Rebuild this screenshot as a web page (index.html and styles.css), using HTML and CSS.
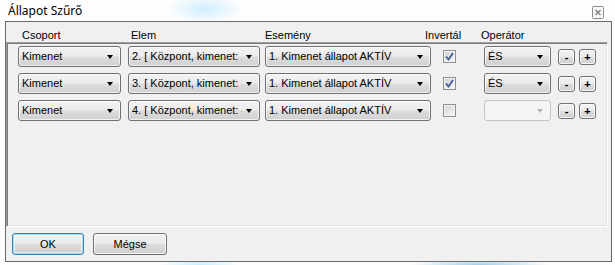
FILE: index.html
```html
<!DOCTYPE html>
<html lang="hu">
<head>
    <meta charset="UTF-8">
    <title>Állapot Szűrő</title>
    <link rel="stylesheet" href="styles.css">
</head>
<body>
    <div class="window">
        <div class="titlebar">
            <span class="title">Állapot Szűrő</span>
            <span class="close">
                <svg width="12" height="13" viewBox="0 0 12 13">
                    <rect x="0.5" y="0.5" width="11" height="12" rx="1" fill="#f7f7f7" stroke="#8c8c8c"/>
                    <path d="M3.5 4 L8.5 9 M8.5 4 L3.5 9" stroke="#7a7a7a" stroke-width="1.2"/>
                </svg>
            </span>
        </div>

        <div class="client">
            <div class="header">
                <span>Csoport</span>
                <span>Elem</span>
                <span>Esemény</span>
                <span>Invertál</span>
                <span>Operátor</span>
            </div>

            <div class="panel">
                <!-- Row 1 -->
                <div class="row">
                    <div class="combo w-group"><span class="combo-text">Kimenet</span><span class="arrow"></span></div>
                    <div class="combo w-elem"><span class="combo-text">2. [ Központ, kimenet: 2 ]</span><span class="arrow"></span></div>
                    <div class="combo w-event"><span class="combo-text">1. Kimenet állapot AKTÍV</span><span class="arrow"></span></div>
                    <span class="check checked">
                        <svg width="9" height="9" viewBox="0 0 9 9"><path d="M1 4.5 L3.5 7.5 L8 1" fill="none" stroke="#3f5f99" stroke-width="1.8"/></svg>
                    </span>
                    <div class="combo w-op"><span class="combo-text">ÉS</span><span class="arrow"></span></div>
                    <button class="small-btn">-</button>
                    <button class="small-btn">+</button>
                </div>

                <!-- Row 2 -->
                <div class="row">
                    <div class="combo w-group"><span class="combo-text">Kimenet</span><span class="arrow"></span></div>
                    <div class="combo w-elem"><span class="combo-text">3. [ Központ, kimenet: 3 ]</span><span class="arrow"></span></div>
                    <div class="combo w-event"><span class="combo-text">1. Kimenet állapot AKTÍV</span><span class="arrow"></span></div>
                    <span class="check checked">
                        <svg width="9" height="9" viewBox="0 0 9 9"><path d="M1 4.5 L3.5 7.5 L8 1" fill="none" stroke="#3f5f99" stroke-width="1.8"/></svg>
                    </span>
                    <div class="combo w-op"><span class="combo-text">ÉS</span><span class="arrow"></span></div>
                    <button class="small-btn">-</button>
                    <button class="small-btn">+</button>
                </div>

                <!-- Row 3 -->
                <div class="row">
                    <div class="combo w-group"><span class="combo-text">Kimenet</span><span class="arrow"></span></div>
                    <div class="combo w-elem"><span class="combo-text">4. [ Központ, kimenet: 4 ]</span><span class="arrow"></span></div>
                    <div class="combo w-event"><span class="combo-text">1. Kimenet állapot AKTÍV</span><span class="arrow"></span></div>
                    <span class="check"></span>
                    <div class="combo w-op disabled"><span class="combo-text"></span><span class="arrow"></span></div>
                    <button class="small-btn">-</button>
                    <button class="small-btn">+</button>
                </div>
            </div>

            <div class="footer">
                <button class="btn btn-ok">OK</button>
                <button class="btn btn-cancel">Mégse</button>
            </div>
        </div>
    </div>
</body>
</html>
```

FILE: styles.css
```css
/* Global */
body, html {
    margin: 0;
    padding: 0;
    overflow: hidden;
    font-family: 'Liberation Sans', Arial, sans-serif;
    font-size: 11px;
    color: #000;
}

/* Window frame */
.window {
    width: 615px;
    height: 265px;
    display: flex;
    flex-direction: column;
    background:
        radial-gradient(ellipse 38px 14px at 205px 9px, rgba(205, 238, 255, 0.95), rgba(255, 255, 255, 0)),
        radial-gradient(ellipse 40px 6px at 200px 265px, rgba(190, 235, 255, 0.9), rgba(255, 255, 255, 0)),
        radial-gradient(ellipse 70px 6px at 480px 265px, rgba(150, 200, 230, 0.9), rgba(255, 255, 255, 0)),
        #fdfdfd;
}

.titlebar {
    height: 21px;
    display: flex;
    justify-content: space-between;
    align-items: flex-start;
    padding: 0 11px 0 8px;
    box-sizing: border-box;
}

.title {
    font-family: 'Noto Sans', sans-serif;
    font-size: 12px;
    line-height: 15px;
    margin-top: 3px;
}

.close {
    display: flex;
    margin-top: 6px;
}

/* Client area */
.client {
    flex: 1;
    margin: 0 3px 3px 5px;
    border: 1px solid #6a6a6a;
    background: #f0f0f0;
    display: flex;
    flex-direction: column;
}

.header {
    height: 20px;
    box-sizing: border-box;
    padding: 7px 0 0 16px;
    display: grid;
    grid-template-columns: 109px 134px 160px 56px auto;
    line-height: 13px;
}

.panel {
    height: 185px;
    margin-right: 3px;
    box-sizing: border-box;
    border: 1px solid;
    border-color: #a0a0a0 #fff #fff #a0a0a0;
    box-shadow: inset 1px 1px 0 #7a7a7a, inset -1px -1px 0 #e3e3e3;
    padding: 3px 0 0 11px;
    display: flex;
    flex-direction: column;
    gap: 6px;
}

.row {
    height: 21px;
    display: grid;
    grid-template-columns: 110px 137px 178px 41px 74px 21px 17px;
    align-items: center;
}

/* Combo boxes */
.combo {
    height: 21px;
    box-sizing: border-box;
    border: 1px solid #707070;
    border-radius: 3px;
    background: linear-gradient(#f3f3f3 0%, #ebebeb 48%, #dddddd 52%, #d0d0d0 100%);
    box-shadow: inset 0 0 0 1px rgba(255, 255, 255, 0.7);
    display: flex;
    align-items: center;
    padding: 0 7px 0 3px;
    gap: 4px;
}

.combo-text {
    flex: 1;
    overflow: hidden;
    white-space: nowrap;
    line-height: 13px;
}

.arrow {
    width: 0;
    height: 0;
    border-left: 3.5px solid transparent;
    border-right: 3.5px solid transparent;
    border-top: 4px solid #000;
}

.w-group { width: 103px; }
.w-elem  { width: 132px; }
.w-event { width: 166px; }
.w-op    { width: 67px; }

.combo.disabled {
    border-color: #c2c4c6;
    background: #f4f4f4;
    box-shadow: none;
}

.combo.disabled .arrow {
    border-top-color: #b4b4b4;
}

/* Checkbox */
.check {
    width: 13px;
    height: 13px;
    box-sizing: border-box;
    border: 1px solid #8e8f8f;
    background: linear-gradient(135deg, #cdd1d6, #f7f7f7);
    box-shadow: inset 0 0 0 1px #f4f4f4;
    display: flex;
    align-items: center;
    justify-content: center;
}

/* Buttons */
.small-btn, .btn {
    font-family: 'Liberation Sans', Arial, sans-serif;
    font-size: 11px;
    color: #000;
    padding: 0;
    border: 1px solid #707070;
    border-radius: 3px;
    background: linear-gradient(#f2f2f2 0%, #ebebeb 48%, #dddddd 52%, #cfcfcf 100%);
    box-shadow: inset 0 0 0 1px rgba(255, 255, 255, 0.8);
    cursor: pointer;
}

.small-btn {
    width: 17px;
    height: 16px;
    line-height: 12px;
    font-weight: bold;
}

.footer {
    flex: 1;
    display: flex;
    gap: 9px;
    padding: 6px 0 0 6px;
    align-items: flex-start;
}

.btn {
    height: 22px;
}

.btn-ok {
    width: 72px;
    border-color: #3c7fb1;
    box-shadow: inset 0 0 0 1px #9fdcf6, inset 0 0 0 2px rgba(255, 255, 255, 0.5);
}

.btn-cancel {
    width: 74px;
}
```
